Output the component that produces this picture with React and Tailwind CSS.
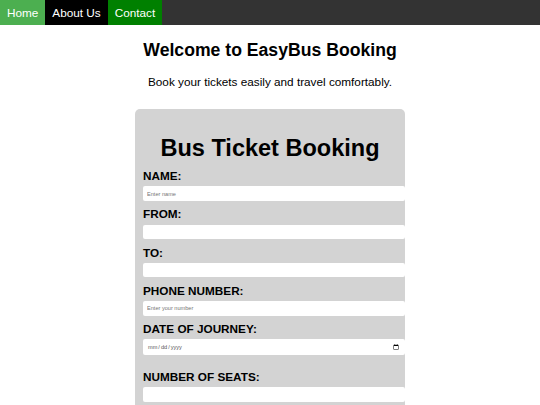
import React, { useState } from "react";

const fields = [
  { label: "NAME:", name: "name", type: "text", placeholder: "Enter name" },
  { label: "FROM:", name: "from", type: "text", placeholder: "" },
  { label: "TO:", name: "to", type: "text", placeholder: "" },
  { label: "PHONE NUMBER:", name: "phone", type: "tel", placeholder: "Enter your number" },
  { label: "DATE OF JOURNEY:", name: "date", type: "date", placeholder: "" },
  { label: "NUMBER OF SEATS:", name: "seats", type: "number", placeholder: "" },
];

export default function App() {
  const [form, setForm] = useState({});

  function handleChange(e) {
    setForm({ ...form, [e.target.name]: e.target.value });
  }

  return (
    <div className="min-h-screen bg-white text-black font-['Liberation_Sans',Arial,sans-serif]">
      {/* Nav */}
      <nav className="flex h-[25px] bg-[#333333]">
        <a href="#" className="px-[7px] text-[11.76px] leading-[25px] text-white bg-[#4caf50]">Home</a>
        <a href="#" className="px-[7px] text-[11.76px] leading-[25px] text-white bg-black">About Us</a>
        <a href="#" className="px-[7px] text-[11.76px] leading-[25px] text-white bg-[#008000]">Contact</a>
      </nav>

      <h2 className="mt-[14.6px] text-center text-[17.64px] leading-[20.3px] font-bold">
        Welcome to EasyBus Booking
      </h2>
      <p className="mt-[15.3px] text-center text-[11.76px] leading-[13.5px]">
        Book your tickets easily and travel comfortably.
      </p>

      {/* Booking form */}
      <form
        onSubmit={(e) => e.preventDefault()}
        className="mx-auto mt-[20.6px] w-[270px] rounded-[5px] bg-[#d3d3d3] px-[8px] pt-[26.2px] pb-[10px]"
      >
        <h1 className="text-center text-[23.52px] leading-[27px] font-bold">Bus Ticket Booking</h1>
        <div className="mt-[3.8px]">
          {fields.map((f) => (
            <div key={f.name}>
              <label
                htmlFor={f.name}
                className={`block text-[11.76px] leading-[13.5px] font-bold ${
                  f.name === "seats" ? "mt-[15px]" : "mt-[6.5px]"
                }`}
              >
                {f.label}
              </label>
              <input
                id={f.name}
                name={f.name}
                type={f.type}
                placeholder={f.placeholder}
                value={form[f.name] || ""}
                onChange={handleChange}
                className={`mt-[3.8px] block w-[262px] rounded-[2px] bg-white px-[4px] text-[5.6px] outline-none placeholder:text-[#757575] ${
                  f.type === "date" ? "h-[15.6px] text-[#555]" : "h-[14.5px]"
                }`}
              />
            </div>
          ))}
        </div>
      </form>
    </div>
  );
}
